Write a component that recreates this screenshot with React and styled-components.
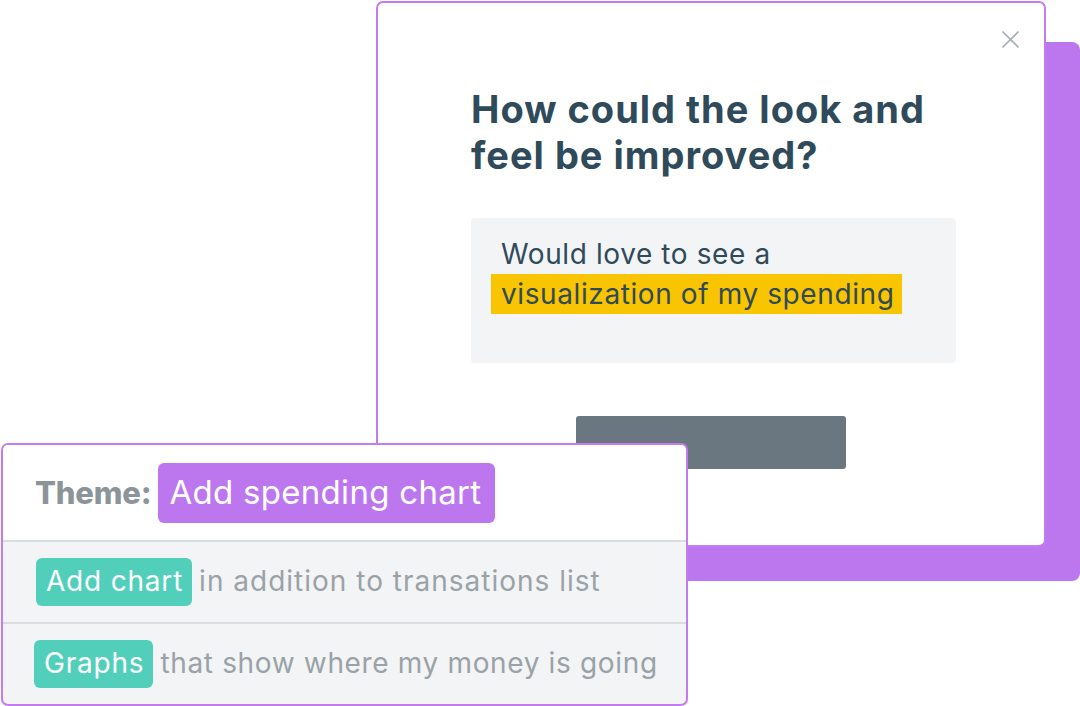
import React from "react";
import styled, { createGlobalStyle } from "styled-components";

const Global = createGlobalStyle`
  html, body {
    margin: 0;
    padding: 0;
    background: #ffffff;
  }
  body {
    font-family: "Inter", "Noto Sans", sans-serif;
  }
`;

const purple = "#bd77ee";
const teal = "#52cfbb";
const ink = "#2f4a5a";

const Canvas = styled.div`
  position: relative;
  width: 1080px;
  height: 706px;
  overflow: hidden;
  background: #fff;
`;

const Backdrop = styled.div`
  position: absolute;
  left: 410px;
  top: 42px;
  width: 670px;
  height: 539px;
  background: ${purple};
  border-radius: 8px;
`;

const SurveyCard = styled.div`
  position: absolute;
  left: 376px;
  top: 1px;
  width: 670px;
  height: 546px;
  box-sizing: border-box;
  background: #fff;
  border: 2px solid #c27cf0;
  border-radius: 7px;
  padding: 83px 88px 0 93px;
  display: flex;
  flex-direction: column;
`;

const Close = styled.button`
  position: absolute;
  top: 26px;
  right: 24px;
  width: 20px;
  height: 20px;
  padding: 0;
  border: 0;
  background: none;
  display: flex;
  align-items: center;
  justify-content: center;
`;

const Heading = styled.h1`
  margin: 0;
  font-size: 38px;
  line-height: 46px;
  font-weight: 700;
  color: ${ink};
  letter-spacing: 1px;
`;

const AnswerBox = styled.div`
  margin-top: 40px;
  height: 145px;
  box-sizing: border-box;
  background: #f3f4f6;
  border-radius: 4px;
  padding: 17px 20px 0 20px;
  font-size: 28px;
  color: ${ink};
  letter-spacing: 0.6px;
`;

const Line = styled.div`
  padding-left: 10px;
  line-height: 39px;
`;

const Highlight = styled.span`
  display: inline-block;
  background: #f9c400;
  padding: 0 8px 0 10px;
  line-height: 40px;
`;

const Submit = styled.div`
  margin: 53px 0 0 105px;
  width: 270px;
  height: 53px;
  background: #6a7780;
  border-radius: 3px;
`;

const ThemeCard = styled.div`
  position: absolute;
  left: 1px;
  top: 443px;
  width: 687px;
  height: 263px;
  box-sizing: border-box;
  border: 2px solid #c27cf0;
  border-radius: 7px;
  overflow: hidden;
  background: #f3f4f6;
  display: flex;
  flex-direction: column;
`;

const ThemeHeader = styled.div`
  height: 95px;
  flex: none;
  background: #fff;
  display: flex;
  align-items: center;
  gap: 7px;
  padding-left: 32px;
`;

const ThemeLabel = styled.span`
  font-size: 31px;
  font-weight: 800;
  letter-spacing: -0.2px;
  color: #8b9499;
`;

const Pill = styled.span`
  display: inline-flex;
  align-items: center;
  box-sizing: border-box;
  height: ${p => (p.big ? 60 : 48)}px;
  padding: 0 ${p => (p.big ? 14 : 9)}px 2px ${p => (p.big ? 11 : 10)}px;
  border-radius: 6px;
  background: ${p => p.color};
  color: #fff;
  font-size: ${p => (p.big ? 33 : 28)}px;
  letter-spacing: ${p => (p.big ? 0.3 : 0.8)}px;
  white-space: nowrap;
`;

const Row = styled.div`
  height: 82px;
  flex: none;
  border-top: 2px solid #d8dddf;
  display: flex;
  align-items: center;
  gap: 7px;
  padding-left: ${p => p.indent}px;
  box-sizing: border-box;
`;

const RowText = styled.span`
  font-size: 28px;
  letter-spacing: ${p => p.spacing}px;
  color: #9aa2a7;
  white-space: nowrap;
  padding-bottom: 2px;
`;

export default function App() {
  return (
    <Canvas>
      <Global />
      <Backdrop />
      <SurveyCard>
        <Close aria-label="close">
          <svg width="17" height="17" viewBox="0 0 17 17">
            <path d="M1 1 L16 16 M16 1 L1 16" stroke="#a3adb2" strokeWidth="1.7" strokeLinecap="round" />
          </svg>
        </Close>
        <Heading>
          How could the look and
          <br />
          feel be improved?
        </Heading>
        <AnswerBox>
          <Line>Would love to see a</Line>
          <Highlight>visualization of my spending</Highlight>
        </AnswerBox>
        <Submit />
      </SurveyCard>
      <ThemeCard>
        <ThemeHeader>
          <ThemeLabel>Theme:</ThemeLabel>
          <Pill big color={purple}>Add spending chart</Pill>
        </ThemeHeader>
        <Row indent={33}>
          <Pill color={teal}>Add chart</Pill>
          <RowText spacing={1}>in addition to transations list</RowText>
        </Row>
        <Row indent={31}>
          <Pill color={teal}>Graphs</Pill>
          <RowText spacing={0.65}>that show where my money is going</RowText>
        </Row>
      </ThemeCard>
    </Canvas>
  );
}
